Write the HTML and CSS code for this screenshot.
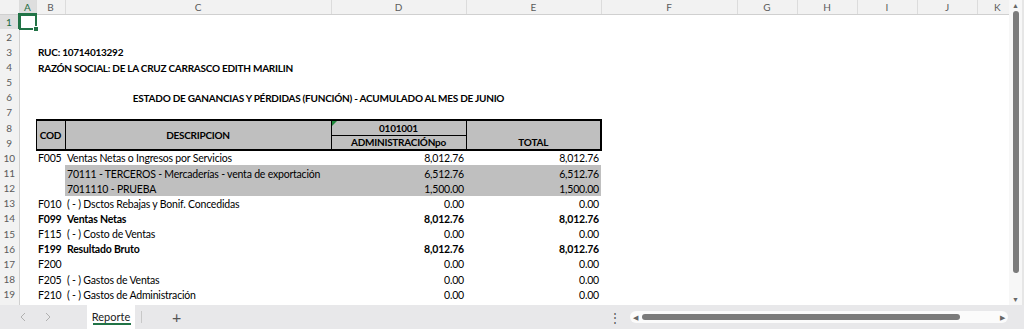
FILE: index.html
```html
<!DOCTYPE html>
<html lang="es">

<head>
    <meta charset="UTF-8">
    <meta name="viewport" content="width=device-width, initial-scale=1.0">
    <title>Reporte</title>
    <link rel="stylesheet" href="styles.css">
</head>

<body>
    <div class="window">
        <div class="main">
            <div class="sheet">
                <table class="grid">
                    <colgroup>
                        <col class="c-row">
                        <col class="c-a">
                        <col class="c-b">
                        <col class="c-c">
                        <col class="c-d">
                        <col class="c-e">
                        <col class="c-f">
                        <col class="c-g">
                        <col class="c-g">
                        <col class="c-g">
                        <col class="c-g">
                        <col class="c-k">
                    </colgroup>
                    <thead>
                        <tr>
                            <th class="corner"></th>
                            <th class="sel">A</th>
                            <th>B</th>
                            <th>C</th>
                            <th>D</th>
                            <th>E</th>
                            <th>F</th>
                            <th>G</th>
                            <th>H</th>
                            <th>I</th>
                            <th>J</th>
                            <th>K</th>
                        </tr>
                    </thead>
                    <tbody>
                        <tr>
                            <th class="sel">1</th>
                            <td class="active"><span class="cursor"></span></td>
                            <td colspan="10"></td>
                        </tr>
                        <tr>
                            <th>2</th>
                            <td colspan="11"></td>
                        </tr>
                        <tr>
                            <th>3</th>
                            <td></td>
                            <td colspan="10" class="b caps">RUC: 10714013292</td>
                        </tr>
                        <tr>
                            <th>4</th>
                            <td></td>
                            <td colspan="10" class="b caps">RAZÓN SOCIAL: DE LA CRUZ CARRASCO EDITH MARILIN</td>
                        </tr>
                        <tr>
                            <th>5</th>
                            <td colspan="11"></td>
                        </tr>
                        <tr>
                            <th>6</th>
                            <td></td>
                            <td colspan="4" class="b caps center">ESTADO DE GANANCIAS Y PÉRDIDAS (FUNCIÓN) - ACUMULADO AL MES DE JUNIO</td>
                            <td colspan="6"></td>
                        </tr>
                        <tr>
                            <th>7</th>
                            <td colspan="11"></td>
                        </tr>
                        <tr>
                            <th>8</th>
                            <td></td>
                            <td rowspan="2" class="hd mid">COD</td>
                            <td rowspan="2" class="hd mid">DESCRIPCION</td>
                            <td class="hd flagged">0101001<span class="flag"></span></td>
                            <td rowspan="2" class="hd low">TOTAL</td>
                            <td colspan="6"></td>
                        </tr>
                        <tr>
                            <th>9</th>
                            <td></td>
                            <td class="hd">ADMINISTRACIÓNpo</td>
                            <td colspan="6"></td>
                        </tr>
                        <tr>
                            <th>10</th>
                            <td></td>
                            <td>F005</td>
                            <td>Ventas Netas o Ingresos por Servicios</td>
                            <td class="num">8,012.76</td>
                            <td class="num">8,012.76</td>
                            <td colspan="6"></td>
                        </tr>
                        <tr>
                            <th>11</th>
                            <td></td>
                            <td></td>
                            <td class="g">70111 - TERCEROS - Mercaderías - venta de exportación</td>
                            <td class="g num">6,512.76</td>
                            <td class="g num">6,512.76</td>
                            <td colspan="6"></td>
                        </tr>
                        <tr>
                            <th>12</th>
                            <td></td>
                            <td></td>
                            <td class="g">7011110 - PRUEBA</td>
                            <td class="g num">1,500.00</td>
                            <td class="g num">1,500.00</td>
                            <td colspan="6"></td>
                        </tr>
                        <tr>
                            <th>13</th>
                            <td></td>
                            <td>F010</td>
                            <td>( - ) Dsctos Rebajas y Bonif. Concedidas</td>
                            <td class="num">0.00</td>
                            <td class="num">0.00</td>
                            <td colspan="6"></td>
                        </tr>
                        <tr class="b">
                            <th>14</th>
                            <td></td>
                            <td>F099</td>
                            <td>Ventas Netas</td>
                            <td class="num">8,012.76</td>
                            <td class="num">8,012.76</td>
                            <td colspan="6"></td>
                        </tr>
                        <tr>
                            <th>15</th>
                            <td></td>
                            <td>F115</td>
                            <td>( - ) Costo de Ventas</td>
                            <td class="num">0.00</td>
                            <td class="num">0.00</td>
                            <td colspan="6"></td>
                        </tr>
                        <tr class="b">
                            <th>16</th>
                            <td></td>
                            <td>F199</td>
                            <td>Resultado Bruto</td>
                            <td class="num">8,012.76</td>
                            <td class="num">8,012.76</td>
                            <td colspan="6"></td>
                        </tr>
                        <tr>
                            <th>17</th>
                            <td></td>
                            <td>F200</td>
                            <td></td>
                            <td class="num">0.00</td>
                            <td class="num">0.00</td>
                            <td colspan="6"></td>
                        </tr>
                        <tr>
                            <th>18</th>
                            <td></td>
                            <td>F205</td>
                            <td>( - ) Gastos de Ventas</td>
                            <td class="num">0.00</td>
                            <td class="num">0.00</td>
                            <td colspan="6"></td>
                        </tr>
                        <tr>
                            <th>19</th>
                            <td></td>
                            <td>F210</td>
                            <td>( - ) Gastos de Administración</td>
                            <td class="num">0.00</td>
                            <td class="num">0.00</td>
                            <td colspan="6"></td>
                        </tr>
                        <tr>
                            <th></th>
                            <td colspan="11"></td>
                        </tr>
                    </tbody>
                </table>
            </div>
            <div class="vscroll">
                <span class="arrow">&#9650;</span>
                <span class="vthumb"></span>
                <span class="fill"></span>
                <span class="arrow">&#9660;</span>
            </div>
        </div>

        <div class="tabbar">
            <div class="nav">
                <svg width="6" height="10" viewBox="0 0 6 10"><path d="M5 1 1 5l4 4" fill="none" stroke="#b0b0b0" stroke-width="1"/></svg>
                <svg width="6" height="10" viewBox="0 0 6 10"><path d="M1 1l4 4-4 4" fill="none" stroke="#b0b0b0" stroke-width="1"/></svg>
            </div>
            <div class="tab">Reporte</div>
            <span class="sep"></span>
            <span class="add">+</span>
            <span class="fill"></span>
            <span class="dots">&#8942;</span>
            <div class="hscroll">
                <span class="arrow">&#9664;</span>
                <span class="hthumb"></span>
                <span class="arrow">&#9654;</span>
            </div>
        </div>
    </div>
</body>

</html>
```

FILE: styles.css
```css
body {
    margin: 0;
    background: #e6e6e6;
    font-family: 'Lato', 'Liberation Sans', sans-serif;
}

.window {
    width: 1024px;
    height: 329px;
    display: flex;
    flex-direction: column;
    overflow: hidden;
}

.main {
    display: flex;
    height: 305px;
}

.sheet {
    width: 1009px;
    overflow: hidden;
    background: #fff;
}

.grid {
    border-collapse: collapse;
    table-layout: fixed;
    width: 1017px;
    font-size: 10.5px;
    letter-spacing: -0.2px;
    color: #000;
}

.c-row { width: 19px; }
.c-a { width: 17px; }
.c-b { width: 29px; }
.c-c { width: 266px; }
.c-d { width: 135px; }
.c-e { width: 135px; }
.c-f { width: 136px; }
.c-g { width: 60px; }
.c-k { width: 40px; }

th {
    background: #f2f2f2;
    color: #5b5b5b;
    font-weight: 400;
    font-size: 10px;
    letter-spacing: 0;
    line-height: 12px;
    padding: 0;
}

thead tr {
    height: 14px;
}

thead th {
    border-bottom: 1px solid #d0d0d0;
    border-left: 1px solid #dcdcdc;
}

thead th.corner {
    border-left: none;
}

tbody th {
    border-right: 1px solid #d0d0d0;
    text-align: center;
}

th.sel {
    background: #dedede;
    color: #1d6b3e;
}

thead th.sel {
    border-bottom: 2px solid #217346;
}

tbody th.sel {
    border-right: 2px solid #217346;
}

tbody tr {
    height: 15.15px;
}

td {
    padding: 0 2px 1px;
    line-height: 12px;
    white-space: nowrap;
    overflow: hidden;
    vertical-align: bottom;
}

.b {
    font-weight: 700;
}

.caps,
.hd {
    font-size: 10px;
    letter-spacing: -0.25px;
}

.center {
    text-align: center;
}

.num {
    text-align: right;
}

.g {
    background: #bfbfbf;
}

.hd {
    background: #bfbfbf;
    border: 1px solid #000;
    font-weight: 700;
    text-align: center;
}

.hd.mid {
    vertical-align: middle;
}

.hd.low {
    vertical-align: bottom;
}

tr:nth-child(8) .hd {
    border-top-width: 2px;
}

tr:nth-child(9) .hd,
.hd.mid,
.hd.low {
    border-bottom-width: 2px;
}

.hd.mid:first-of-type {
    border-left-width: 2px;
}

.hd.low {
    border-right-width: 2px;
}

.flagged,
.active {
    position: relative;
    overflow: visible;
}

.flag {
    position: absolute;
    left: 0;
    top: 0;
    border-top: 5px solid #1f8a3c;
    border-right: 5px solid transparent;
}

.cursor {
    position: absolute;
    left: -1px;
    top: -1px;
    right: -1px;
    bottom: -1px;
    border: 2px solid #217346;
}

.cursor::after {
    content: "";
    position: absolute;
    right: -4px;
    bottom: -4px;
    width: 4px;
    height: 4px;
    background: #217346;
    border: 1px solid #fff;
}

/* scrollbars */
.vscroll {
    width: 13px;
    background: #f7f7f7;
    display: flex;
    flex-direction: column;
    align-items: center;
}

.arrow {
    font-size: 7px;
    color: #666;
    line-height: 10px;
}

.vscroll .arrow {
    height: 11px;
}

.vthumb {
    width: 6px;
    height: 262px;
    background: #7b7b7b;
    border-radius: 3px;
}

.fill {
    flex: 1;
}

.tabbar {
    flex: 1;
    display: flex;
    align-items: center;
    background: #e8e8ea;
    font-size: 11px;
}

.nav {
    display: flex;
    align-items: center;
    gap: 19px;
    padding-left: 20px;
    width: 67px;
    box-sizing: border-box;
}

.tab {
    align-self: stretch;
    width: 48px;
    margin-left: 20px;
    background: #fff;
    display: flex;
    justify-content: center;
    align-items: center;
    position: relative;
    color: #222;
    font-size: 11px;
    padding-bottom: 2px;
    box-sizing: border-box;
}

.tab::after {
    content: "";
    position: absolute;
    left: 6px;
    right: 4px;
    bottom: 4px;
    height: 2px;
    background: #217346;
}

.sep {
    width: 1px;
    height: 12px;
    background: #c8c8c8;
    margin-left: 6px;
}

.add {
    margin-left: 30px;
    font-size: 16px;
    color: #555;
    line-height: 16px;
}

.dots {
    color: #555;
    font-size: 12px;
    margin-right: 9px;
}

.hscroll {
    width: 378px;
    height: 12px;
    margin-right: 16px;
    background: #fbfbfb;
    border-radius: 6px;
    display: flex;
    align-items: center;
    padding: 0 3px;
    box-sizing: border-box;
}

.hthumb {
    width: 320px;
    height: 6px;
    margin: 0 40px 0 4px;
    background: #7b7b7b;
    border-radius: 3px;
}
```
